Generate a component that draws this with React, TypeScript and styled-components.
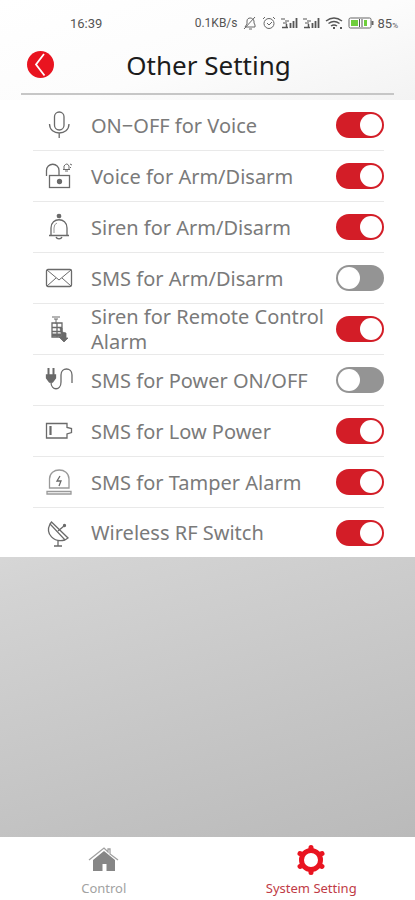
import React from "react";
import styled, { createGlobalStyle, css } from "styled-components";

const Global = createGlobalStyle`
  * { box-sizing: border-box; }
  body {
    margin: 0;
    font-family: "Noto Sans", "Open Sans", sans-serif;
    color: #7a7a7a;
  }
`;

const Page = styled.div`
  display: flex;
  flex-direction: column;
  min-height: 100vh;
  background: linear-gradient(163deg, #ffffff 0%, #fcfcfc 12%, #f3f3f3 22%, #d3d3d3 58%, #b7b7b7 98%);
`;

const Header = styled.header`
  padding: 14px 21px 5px;
`;

const StatusBar = styled.div`
  display: flex;
  align-items: center;
  justify-content: space-between;
  height: 18px;
  padding-left: 49px;
  margin-right: -4px;
  font-family: Roboto, sans-serif;
  font-size: 13px;
  color: #555555;
`;

const StatusItems = styled.div`
  display: flex;
  align-items: center;
  gap: 5px;
  font-size: 12px;
`;

const Small = styled.span`
  font-size: 8px;
`;

const Battery = styled.span`
  display: flex;
  align-items: center;
  gap: 4px;
  font-size: 13px;
`;

const TitleBar = styled.div`
  display: grid;
  grid-template-columns: 36px 1fr 34px;
  align-items: center;
  height: 63px;
  padding-top: 4px;
  border-bottom: 2px solid #c6c6c6;
`;

const BackButton = styled.button`
  display: flex;
  width: 27px;
  height: 27px;
  margin-left: 6px;
  padding: 0;
  border: 0;
  border-radius: 50%;
  background: #e91420;
`;

const Title = styled.h1`
  margin: 0;
  font-size: 26px;
  line-height: 36px;
  font-weight: 400;
  text-align: center;
  color: #1c1c1c;
`;

const List = styled.ul`
  margin: 0;
  padding: 0 31px 0 33px;
  list-style: none;
  background: #ffffff;
`;

const Row = styled.li`
  display: grid;
  grid-template-columns: 52px 1fr 48px;
  align-items: center;
  min-height: 51px;
  border-bottom: 1px solid #e9e9e9;

  &:last-child {
    min-height: 49px;
    border-bottom: 0;
  }
`;

const RowIcon = styled.svg`
  width: 28px;
  height: 28px;
  margin-left: 12px;
  fill: none;
  stroke: #6a6a6a;
  stroke-width: 1.3;
`;

const RowLabel = styled.label`
  padding-left: 6px;
  margin-right: -4px;
  font-size: 20px;
  line-height: 25px;
`;

const Toggle = styled.input`
  appearance: none;
  display: flex;
  align-items: center;
  width: 48px;
  height: 26px;
  margin: 0;
  padding: 0 2px;
  border-radius: 13px;
  background: #949494;

  &::before {
    content: "";
    width: 22px;
    height: 22px;
    border-radius: 50%;
    background: #ffffff;
  }

  &:checked {
    justify-content: flex-end;
    background: #d31d27;
  }
`;

const Spacer = styled.div`
  flex: 1;
`;

const Nav = styled.nav`
  display: grid;
  grid-template-columns: 1fr 1fr;
  height: 63px;
  background: #ffffff;
`;

const NavLink = styled.a<{ $active?: boolean }>`
  display: flex;
  flex-direction: column;
  align-items: center;
  padding-top: 7px;
  gap: 3px;
  font-size: 13px;
  line-height: 18px;
  text-decoration: none;
  color: #a2a2a2;
  ${(p) => p.$active && css`color: #bf3b46;`}
`;

const icons = {
  mic: (
    <>
      <rect x="9.500" y="1" width="9.500" height="18" rx="4.700" />
      <path d="M4.500 13c0 12 19.500 12 19.500 0M14.200 22v5" />
    </>
  ),
  lock: (
    <>
      <path d="M1.500 14V8.500a6 6 0 0 1 12.500 0V13" />
      <rect x="4.500" y="13.500" width="20" height="12" />
      <circle cx="14.500" cy="19.500" r="2" fill="#6a6a6a" />
      <path d="M18 7.500h7M19 7V4q3-4 5 0v3M20 9h3M25 2l2 1M26 5l-1 1" strokeWidth="1" />
    </>
  ),
  bell: (
    <>
      <circle cx="14" cy="3" r="1.700" fill="#6a6a6a" />
      <path d="M6 22v-7c0-11 16-11 16 0v7M4 22.500h20M11 24c1 2.500 5 2.500 6 0" />
      <path d="M9 20v-5q0-4 3-5" strokeWidth="0.700" />
    </>
  ),
  mail: (
    <>
      <rect x="1.500" y="5.500" width="25" height="17" rx="1.500" />
      <path d="M2 6l12 10L26 6M2 22l9-8M26 22l-9-8" strokeWidth="1" />
    </>
  ),
  remote: (
    <>
      <path d="M7 2h8M9 4h4M11 4v5" strokeWidth="1" />
      <path d="M7 8h10v14H7zM7 12.500h10M7 16.500h10M12 8v14" />
      <path d="M15 13h2v4l4 1v5h2l-4 4-5-5h3z" fill="#6a6a6a" strokeWidth="0.800" />
      <path d="M7 20h9" strokeWidth="3" />
    </>
  ),
  plug: (
    <>
      <path d="M3.500 2v7M8.500 2v7" strokeWidth="2" />
      <path d="M1.500 9h9v3l-3 4h-3l-3-4z" fill="#6a6a6a" />
      <path d="M6 16c0 9 10 9 10 0V9c0-8 11-8 11 0v8" />
    </>
  ),
  battery: (
    <>
      <path d="M1.500 6.500h20.500v4l4.500 1v4l-4.500 1.500v4H1.500z" />
      <path d="M5.500 9v9" strokeWidth="2.200" />
    </>
  ),
  tamper: (
    <g stroke="#9a9a9a">
      <path d="M4.500 20V11c0-12 19.500-12 19.500 0v9zM2 23.500h24v2.500H2z" />
      <path d="M15 8l-3 5h4l-2 5" stroke="#6a6a6a" />
    </g>
  ),
  dish: (
    <>
      <path d="M6.500 3L23 19l-3 2L5 5zM5 5c-5 10 4 19 15 16M13 22v4.500M9 27h8" />
      <path d="M13 12l6-5" />
      <circle cx="19.500" cy="6.500" r="1" fill="#6a6a6a" />
    </>
  ),
};

const settings: { icon: keyof typeof icons; label: string; on: boolean }[] = [
  { icon: "mic", label: "ON−OFF for Voice", on: true },
  { icon: "lock", label: "Voice for Arm/Disarm", on: true },
  { icon: "bell", label: "Siren for Arm/Disarm", on: true },
  { icon: "mail", label: "SMS for Arm/Disarm", on: false },
  { icon: "remote", label: "Siren for Remote Control Alarm", on: true },
  { icon: "plug", label: "SMS for Power ON/OFF", on: false },
  { icon: "battery", label: "SMS for Low Power", on: true },
  { icon: "tamper", label: "SMS for Tamper Alarm", on: true },
  { icon: "dish", label: "Wireless RF Switch", on: true },
];

function Signal() {
  return (
    <svg width="17" height="14" viewBox="0 0 17 14" fill="none" stroke="#555" aria-hidden="true">
      <path d="M0 3h4M4 5h4M2 7h4" strokeWidth="1" />
      <path d="M1 11.500h6M5.500 12V8" strokeWidth="1.500" />
      <path d="M9.500 12V7M12.500 12V5M15.500 12V2" strokeWidth="1.800" />
    </svg>
  );
}

export default function App() {
  return (
    <Page>
      <Global />
      <Header>
        <StatusBar>
          <span>16:39</span>
          <StatusItems>
            <span>0.1KB/s</span>
            <svg width="14" height="14" viewBox="0 0 14 14" fill="none" stroke="#666" aria-hidden="true">
              <path d="M2 11h10V9l-1-2V5C10 1 4 1 4 5v3zM6 13h3M1 13L12 1" />
            </svg>
            <svg width="14" height="14" viewBox="0 0 14 14" fill="none" stroke="#666" aria-hidden="true">
              <circle cx="7" cy="7.500" r="5" />
              <path d="M1 3l2-2M13 3l-2-2M5 7l2 2 3-3" />
            </svg>
            <Signal />
            <Signal />
            <svg width="18" height="14" viewBox="0 0 18 14" fill="none" stroke="#555" aria-hidden="true">
              <path d="M1 5q8-6 16 0M3.500 7.500q5.500-4 11 0M6 10q3-2 6 0" strokeWidth="1.500" />
              <path d="M9 11v2M15 12h2" strokeWidth="2" />
            </svg>
            <Battery>
              <svg width="26" height="14" viewBox="0 0 26 14" aria-hidden="true">
                <rect x="1" y="2" width="22" height="10" rx="1.500" fill="#fff" stroke="#666" />
                <path d="M3 4h7v6H3zM16 4h3v6h-3z" fill="#6fce3c" />
                <path d="M11.500 3v8M14 3v8" stroke="#555" />
                <path d="M24.500 5v4" stroke="#666" strokeWidth="2" />
              </svg>
              <span>85<Small>%</Small></span>
            </Battery>
          </StatusItems>
        </StatusBar>
        <TitleBar>
          <BackButton type="button" aria-label="Back">
            <svg width="27" height="27" viewBox="0 0 27 27" fill="none" stroke="#fff" strokeWidth="1.800" aria-hidden="true">
              <path d="M17 3L9 13.500l8.500 11" />
            </svg>
          </BackButton>
          <Title>Other Setting</Title>
        </TitleBar>
      </Header>
      <List>
        {settings.map((s) => (
          <Row key={s.icon}>
            <RowIcon viewBox="0 0 28 28" aria-hidden="true">{icons[s.icon]}</RowIcon>
            <RowLabel htmlFor={s.icon}>{s.label}</RowLabel>
            <Toggle id={s.icon} type="checkbox" role="switch" defaultChecked={s.on} />
          </Row>
        ))}
      </List>
      <Spacer />
      <Nav>
        <NavLink href="#control">
          <svg width="32" height="32" viewBox="0 0 32 32" aria-hidden="true">
            <path d="M1 16L16 4l4 4V5h2v5l8 6" fill="none" stroke="#a0a0a0" strokeWidth="1.300" />
            <path d="M5 16L16 7l11 9v11h-8.500v-7h-4v7H5z" fill="#868686" />
          </svg>
          Control
        </NavLink>
        <NavLink href="#setting" $active aria-current="page">
          <svg width="32" height="32" viewBox="0 0 32 32" aria-hidden="true">
            <g fill="none" stroke="#e91420">
              <circle cx="16" cy="16" r="9.500" strokeWidth="5" />
              <path d="M16 3.500v2M16 26.500v2M5 9.500l2 1M25 21.500l2 1M5 22.500l2-1M25 10.500l2-1" strokeWidth="5" strokeLinecap="round" />
            </g>
          </svg>
          System Setting
        </NavLink>
      </Nav>
    </Page>
  );
}
